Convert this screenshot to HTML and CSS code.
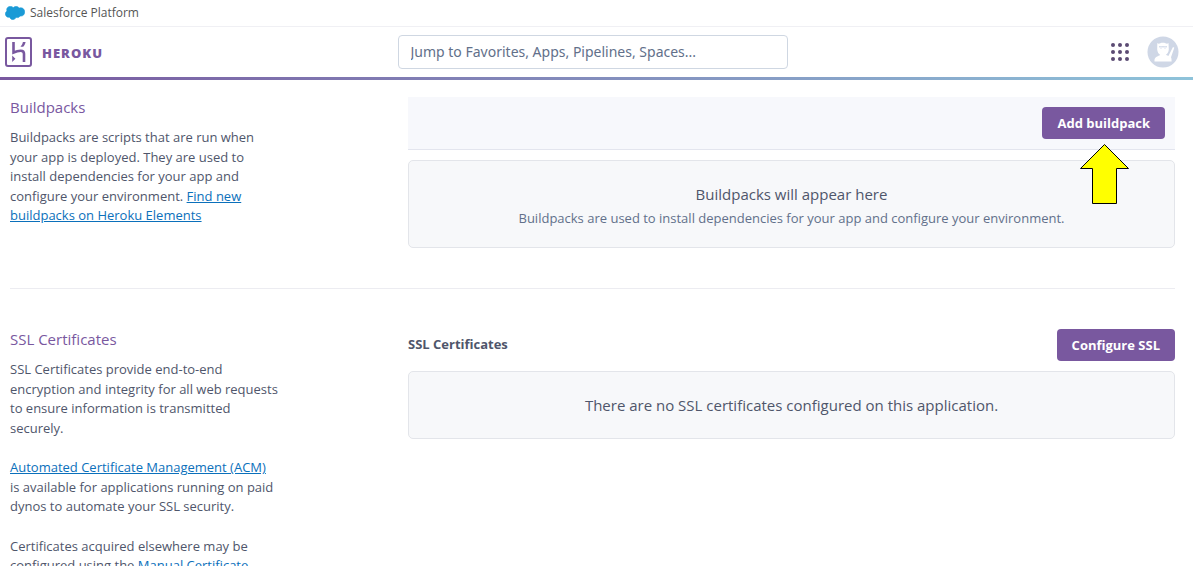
FILE: index.html
```html
<!DOCTYPE html>
<html lang="en">
<head>
<meta charset="utf-8">
<meta name="viewport" content="width=device-width, initial-scale=1">
<title>Settings | Heroku</title>
<link rel="stylesheet" href="styles.css">
</head>
<body>
<div class="platform-bar">
  <svg class="cloud" viewBox="0 0 20 14" width="20" height="14" aria-hidden="true"><path fill="#1a9ad6" stroke="#1a9ad6" stroke-width=".6" d="M8.300 1.600C9 .8 10 .4 11.100.4c1.300 0 2.500.7 3.100 1.700.5-.2 1-.3 1.600-.3 2.300 0 3.900 1.900 3.900 4.200s-1.600 4.100-3.900 4.100c-.3 0-.6 0-.8-.1-.5.900-1.500 1.600-2.600 1.600-.5 0-.9-.1-1.300-.3-.5 1.200-1.700 2.300-3.200 2.300s-2.700-1.100-3.200-2.400c-.2 0-.4.1-.7.1C1.900 11.300.4 9.800.4 7.900c0-1.200.6-2.300 1.600-2.800-.2-.5-.3-1-.3-1.500C1.700 1.700 3.300.4 5.200.4c1.300 0 2.400.4 3.100 1.200z"/></svg>
  <span>Salesforce Platform</span>
</div>
<header class="nav">
  <a class="brand" href="#" aria-label="Heroku">
    <svg viewBox="0 0 27 30" width="27" height="30" aria-hidden="true">
      <rect x="1" y="1" width="25" height="28" rx="2" fill="none" stroke="#79589f" stroke-width="2"/>
      <path d="M8.500 5v10.500c2-.9 4.800-1.700 7.200-1.700 2.600 0 3.300 1.300 3.300 3V25" fill="none" stroke="#79589f" stroke-width="2.600"/>
      <path d="M7.200 18.500v6.500l3.200-3.200zM15.500 9.700c1.300-1.400 2.100-3 2.400-4.700h2.700c-.3 1.800-1.100 3.400-2.400 4.700z" fill="#79589f"/>
    </svg>
    <span class="wordmark">HEROKU</span>
  </a>
  <input class="jump" type="text" aria-label="Jump to" placeholder="Jump to Favorites, Apps, Pipelines, Spaces...">
  <div class="tools">
    <button class="icon-button" type="button" aria-label="Apps">
      <svg viewBox="0 0 20 20" width="20" height="20" fill="#5b4b73"><circle cx="3" cy="3" r="2"/><circle cx="10" cy="3" r="2"/><circle cx="17" cy="3" r="2"/><circle cx="3" cy="10" r="2"/><circle cx="10" cy="10" r="2"/><circle cx="17" cy="10" r="2"/><circle cx="3" cy="17" r="2"/><circle cx="10" cy="17" r="2"/><circle cx="17" cy="17" r="2"/></svg>
    </button>
    <button class="icon-button" type="button" aria-label="Account">
      <svg viewBox="0 0 32 32" width="32" height="32">
        <circle cx="16" cy="16" r="15.500" fill="#cfd7e6"/>
        <path fill="#fff" d="M10.300 7c.9.900 2 .7 3 .3 1.600-.6 3.600-.6 5.200 0 1 .4 2.100.6 3-.3l.3 6.500c-.2 2.400-1.400 4.300-3 5.300l2.600 1.200L26 11l1.300.7-3.300 9.500c.5 1 .6 2.500.6 4.300H7.500c-.2-3.300.8-4.500 5.800-6.500-1.600-1-2.900-2.800-3.100-5.500z"/>
        <path d="M12 10.500h8M12.500 10.500c0 2.200 3 2.200 3 0M16.500 10.500c0 2.200 3 2.200 3 0" fill="none" stroke="#cfd7e6" stroke-width=".7"/>
      </svg>
    </button>
  </div>
</header>
<main class="settings">
  <section class="row">
    <div class="about">
      <h2>Buildpacks</h2>
      <p>Buildpacks are scripts that are run when your app is deployed. They are used to install dependencies for your app and configure your environment. <a href="#">Find new buildpacks on Heroku Elements</a></p>
    </div>
    <div class="content">
      <div class="toolbar">
        <button class="primary" type="button">Add buildpack</button>
        <svg class="arrow" viewBox="0 0 50 62" width="50" height="62" aria-hidden="true"><path d="M25.500 1.500 49.500 25.500H37.500V60.500H13.500V25.500H1.500z" fill="#ff0" stroke="#000"/></svg>
      </div>
      <div class="empty">
        <p class="lead">Buildpacks will appear here</p>
        <p class="hint">Buildpacks are used to install dependencies for your app and configure your environment.</p>
      </div>
    </div>
  </section>
  <section class="row ssl">
    <div class="about">
      <h2>SSL Certificates</h2>
      <p>SSL Certificates provide end-to-end encryption and integrity for all web requests to ensure information is transmitted securely.</p>
      <p><a href="#">Automated Certificate Management (ACM)</a><br>is available for applications running on paid dynos to automate your SSL security.</p>
      <p>Certificates acquired elsewhere may be configured using the <a href="#">Manual Certificate</a></p>
    </div>
    <div class="content">
      <div class="heading">
        <h3>SSL Certificates</h3>
        <button class="primary" type="button">Configure SSL</button>
      </div>
      <div class="empty">
        <p class="lead">There are no SSL certificates configured on this application.</p>
      </div>
    </div>
  </section>
</main>
</body>
</html>
```
FILE: styles.css
```css
* { box-sizing: border-box; }
html { height: 100%; overflow: hidden; }
body {
  margin: 0;
  background: #fff;
  color: #4f566b;
  font: 13px/1.5 "Open Sans", "Noto Sans", sans-serif;
}
h2, h3, p { margin: 0; }
button, input { font: inherit; }
a { color: #0b70bb; }
.platform-bar {
  display: flex;
  align-items: center;
  gap: 5px;
  height: 27px;
  padding-left: 5px;
  border-bottom: 1px solid #f0f0f4;
  color: #555;
  font-size: 12px;
}
.nav {
  display: grid;
  grid-template-columns: 1fr 390px 1fr;
  align-items: center;
  height: 53px;
  padding: 0 13px 0 5px;
  border-bottom: 3px solid;
  border-image: linear-gradient(90deg, #79589f, #8ec3da) 1;
}
.brand {
  display: flex;
  align-items: center;
  gap: 10px;
  color: #79589f;
  text-decoration: none;
}
.wordmark { padding-top: 2px; font: 800 13px/20px "Open Sans", sans-serif; letter-spacing: 1px; }
.jump {
  width: 100%;
  height: 34px;
  padding: 0 12px 2px;
  border: 1px solid #cfd7e2;
  border-radius: 4px;
  background: #fff;
  font: 14px "Noto Sans", sans-serif;
}
.jump::placeholder { color: #62708a; opacity: 1; }
.tools { display: flex; justify-content: flex-end; align-items: center; gap: 17px; padding-right: 1px; }
.icon-button { display: flex; padding: 0; border: 0; background: none; }
.settings { padding: 17px 18px 0 10px; }
.row { display: grid; grid-template-columns: 398px 1fr; }
.row.ssl { margin-top: 40px; padding-top: 40px; border-top: 1px solid #ececf1; }
.about h2 { margin-bottom: 11px; color: #79589f; font-size: 15px; font-weight: 400; line-height: 20px; }
.about p { max-width: 272px; margin-bottom: 20px; }
.toolbar {
  position: relative;
  display: flex;
  justify-content: flex-end;
  padding: 10px;
  border-bottom: 1px solid #e3e5ee;
  background: #f7f8fc;
  margin-bottom: 10px;
}
.arrow { position: absolute; top: 46px; right: 46px; }
.primary {
  height: 32px;
  padding: 1px 15px 0;
  border: 0;
  border-radius: 4px;
  background: #79589f;
  color: #fff;
  font-weight: 700;
}
.empty {
  padding: 22px 20px;
  border: 1px solid #e3e5ea;
  border-radius: 5px;
  background: #f7f8fa;
  text-align: center;
}
.lead { font-size: 15px; line-height: 22px; }
.hint { padding-top: 3px; line-height: 20px; margin-bottom: -3px; color: #62708a; }
.heading { display: flex; justify-content: space-between; align-items: center; margin-bottom: 10px; }
.heading h3 { font-size: 13px; font-weight: 700; }
```
